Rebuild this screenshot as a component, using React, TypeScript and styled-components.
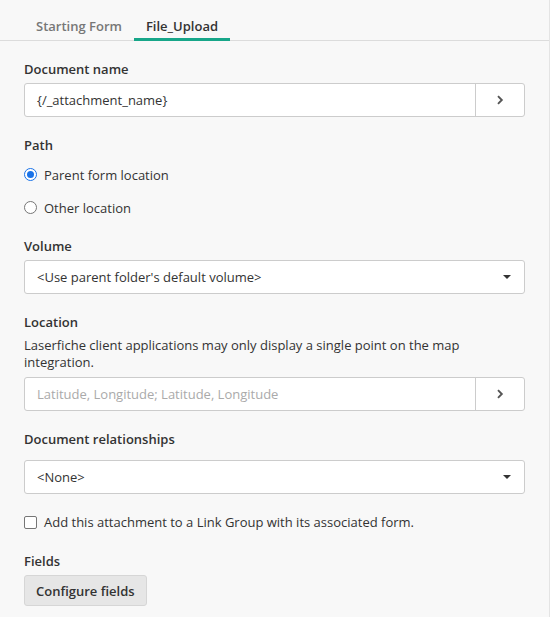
import React from "react";
import styled, { createGlobalStyle } from "styled-components";

const Global = createGlobalStyle`
  html, body { margin: 0; padding: 0; background: #fff; }
  body { font-family: "Open Sans", "Liberation Sans", sans-serif; color: #333; }
  * { box-sizing: border-box; }
`;

const Page = styled.div`
  width: 550px;
  height: 617px;
  background: #f8f8f8;
  border-right: 1px solid #e4e4e4;
  overflow: hidden;
`;

const TabBar = styled.div`
  display: flex;
  padding-left: 24px;
  height: 41px;
  border-bottom: 1px solid #dcdcdc;
  align-items: stretch;
`;

const Tab = styled.div<{ $active?: boolean }>`
  padding: 14px 12px 0 12px;
  display: flex;
  align-items: center;
  font-size: 13px;
  font-weight: 600;
  color: ${(p) => (p.$active ? "#333" : "#777")};
  border-bottom: 3px solid ${(p) => (p.$active ? "#17a689" : "transparent")};
  margin-bottom: -1px;
`;

const Form = styled.div`
  padding: 18px 24px 0 24px;
  display: flex;
  flex-direction: column;
`;

const Section = styled.div<{ $mb?: number }>`
  display: flex;
  flex-direction: column;
  margin-bottom: ${(p) => p.$mb ?? 18}px;
`;

const Label = styled.div<{ $mb?: number }>`
  font-size: 13px;
  font-weight: 600;
  line-height: 20px;
  color: #333;
  margin-bottom: ${(p) => p.$mb ?? 4}px;
`;

const Help = styled.div`
  font-size: 13px;
  line-height: 17px;
  color: #333;
  margin-bottom: 6px;
`;

const InputGroup = styled.div`
  display: flex;
  height: 34px;
  background: #fff;
  border: 1px solid #ccc;
  border-radius: 3px;
`;

const InputText = styled.div<{ $placeholder?: boolean }>`
  flex: 1;
  display: flex;
  align-items: center;
  padding-left: 12px;
  font-size: 13px;
  color: ${(p) => (p.$placeholder ? "#aaa" : "#333")};
`;

const AddonButton = styled.div`
  width: 49px;
  border-left: 1px solid #ccc;
  display: flex;
  align-items: center;
  justify-content: center;
  color: #555;
`;

const Select = styled.div`
  display: flex;
  align-items: center;
  justify-content: space-between;
  height: 34px;
  background: #fff;
  border: 1px solid #ccc;
  border-radius: 3px;
  padding: 0 12px;
  font-size: 13px;
  color: #333;
`;

const Caret = styled.span`
  width: 0;
  height: 0;
  border-left: 4px solid transparent;
  border-right: 4px solid transparent;
  border-top: 4px solid #333;
  margin-right: 1px;
`;

const RadioRow = styled.label`
  display: flex;
  align-items: center;
  height: 33px;
  font-size: 13px;
  color: #333;
  gap: 7px;
`;

const RadioDot = styled.span<{ $checked?: boolean }>`
  width: 13px;
  height: 13px;
  border-radius: 50%;
  border: 1px solid ${(p) => (p.$checked ? "#1a73e8" : "#767676")};
  background: #fff;
  display: flex;
  align-items: center;
  justify-content: center;
  &::after {
    content: "";
    width: 7px;
    height: 7px;
    border-radius: 50%;
    background: ${(p) => (p.$checked ? "#1a73e8" : "transparent")};
  }
`;

const CheckRow = styled.label`
  display: flex;
  align-items: center;
  gap: 7px;
  font-size: 13px;
  color: #333;
  height: 20px;
`;

const CheckBox = styled.span`
  width: 13px;
  height: 13px;
  border: 1px solid #767676;
  border-radius: 2px;
  background: #fff;
`;

const Button = styled.div`
  align-self: flex-start;
  height: 31px;
  padding: 0 11px;
  display: flex;
  align-items: center;
  background: #e6e6e6;
  border: 1px solid #d6d6d6;
  border-radius: 3px;
  font-size: 13px;
  font-weight: 600;
  color: #333;
`;

const Chevron = () => (
  <svg width="10" height="10" viewBox="0 0 10 10">
    <path d="M3 1.2 L6.8 5 L3 8.8" fill="none" stroke="#555" strokeWidth="1.9" />
  </svg>
);

export default function App() {
  return (
    <>
      <Global />
      <Page>
        <TabBar>
          <Tab>Starting Form</Tab>
          <Tab $active>File_Upload</Tab>
        </TabBar>
        <Form>
          <Section $mb={18}>
            <Label $mb={4}>Document name</Label>
            <InputGroup>
              <InputText>{"{/_attachment_name}"}</InputText>
              <AddonButton><Chevron /></AddonButton>
            </InputGroup>
          </Section>
          <Section $mb={12}>
            <Label $mb={3}>Path</Label>
            <RadioRow><RadioDot $checked />Parent form location</RadioRow>
            <RadioRow><RadioDot />Other location</RadioRow>
          </Section>
          <Section $mb={18}>
            <Label $mb={4}>Volume</Label>
            <Select>&lt;Use parent folder's default volume&gt;<Caret /></Select>
          </Section>
          <Section $mb={18}>
            <Label $mb={5}>Location</Label>
            <Help>Laserfiche client applications may only display a single point on the map integration.</Help>
            <InputGroup>
              <InputText $placeholder>Latitude, Longitude; Latitude, Longitude</InputText>
              <AddonButton><Chevron /></AddonButton>
            </InputGroup>
          </Section>
          <Section $mb={18}>
            <Label $mb={11}>Document relationships</Label>
            <Select>&lt;None&gt;<Caret /></Select>
          </Section>
          <Section $mb={19}>
            <CheckRow><CheckBox />Add this attachment to a Link Group with its associated form.</CheckRow>
          </Section>
          <Section>
            <Label $mb={4}>Fields</Label>
            <Button>Configure fields</Button>
          </Section>
        </Form>
      </Page>
    </>
  );
}
